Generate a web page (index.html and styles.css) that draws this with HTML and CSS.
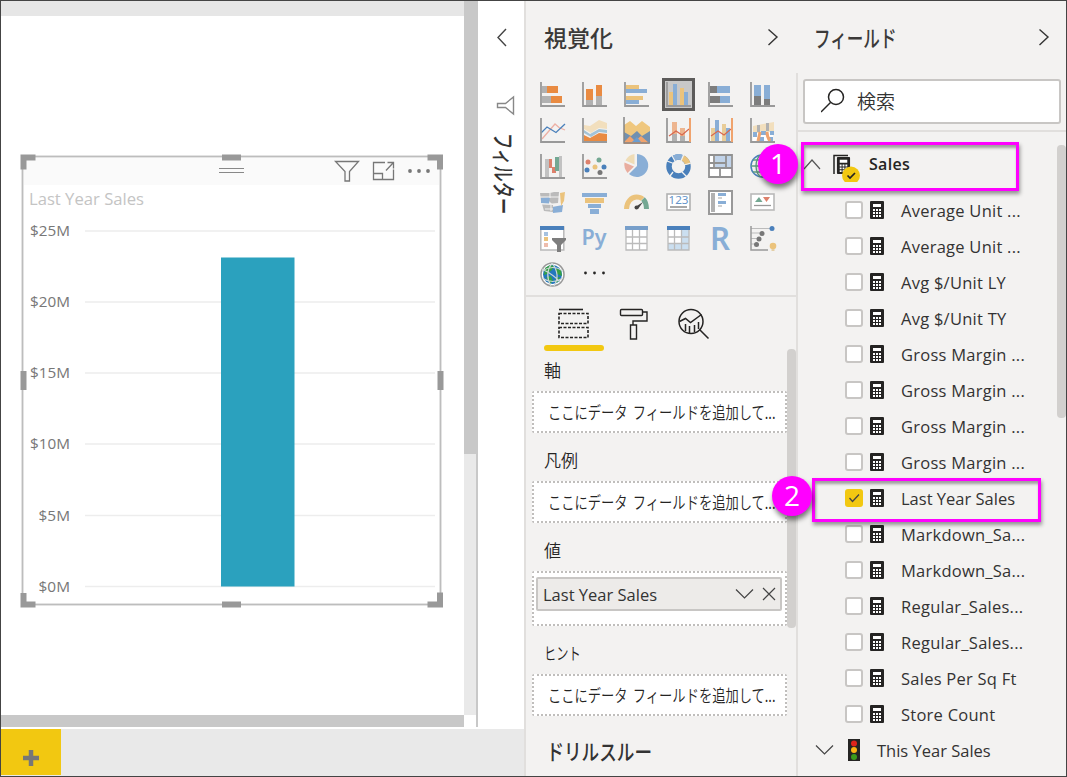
FILE: index.html
```html
<!DOCTYPE html>
<html lang="ja">
<head>
<meta charset="utf-8">
<title>Power BI</title>
<link rel="stylesheet" href="styles.css">
</head>
<body>
<svg class="defs" width="0" height="0">
  <symbol id="calc" viewBox="0 0 14 18"><rect width="14" height="18" rx="1" fill="#252423"/><path d="M3 3h8v3H3z" fill="#fff"/><path d="M3 9h8M3 12h8M3 15h8" stroke="#fff" stroke-width="2" stroke-dasharray="2 1"/></symbol>
  <symbol id="axes" viewBox="0 0 25 25"><path d="M1 0v24h24" fill="none" stroke="#999" stroke-width="1.8"/></symbol>
</svg>
<div class="app">
  <main class="report">
    <div class="workspace">
      <div class="canvas">
        <div class="page">
          <svg class="visual" width="426" height="456" viewBox="19 152 426 456">
            <path d="M24 157h416v28H24z" fill="#fafafa"/>
            <rect x="22.5" y="156.5" width="418" height="448" fill="none" stroke="#e3e3e3" stroke-width="3"/>
            <rect x="22.5" y="156.5" width="418" height="448" fill="none" stroke="#bdbdbd"/>
            <g fill="none" stroke="#999" stroke-width="6"><path d="M23.500 169.500v-12h12M427.500 157.500h12.500v12M23.500 593v11.500h12M427.500 604.500h12.500v-12M222 157.500h19M222 604.500h19M23.500 371v19M440.500 371v19"/></g>
            <path d="M219 168.500h25M219 172.500h25" stroke="#888"/>
            <path d="M335.500 161.500h23l-9 10v9.500h-4.500v-9.500z" fill="none" stroke="#777" stroke-width="1.300"/>
            <path d="M385 162.500h-11.500v17h20v-10M373.500 173.500h9v6M386 170.500l7-7.500M387.500 162.500h6v6" fill="none" stroke="#777" stroke-width="1.300"/>
            <g fill="#777"><circle cx="410" cy="171" r="1.900"/><circle cx="419" cy="171" r="1.900"/><circle cx="428" cy="171" r="1.900"/></g>
            <text x="29" y="204.500" font-size="16" textLength="115" lengthAdjust="spacingAndGlyphs" fill="#c4c4c4">Last Year Sales</text>
            <path d="M85 231h350M85 302h350M85 373h350M85 444h350M85 515.500h350M85 586.500h350" stroke="#ededed" stroke-width="1.600"/>
            <g font-size="15" fill="#777">
              <text x="30" y="236" textLength="40" lengthAdjust="spacingAndGlyphs">$25M</text>
              <text x="30" y="307" textLength="40" lengthAdjust="spacingAndGlyphs">$20M</text>
              <text x="30" y="378" textLength="40" lengthAdjust="spacingAndGlyphs">$15M</text>
              <text x="30" y="449" textLength="40" lengthAdjust="spacingAndGlyphs">$10M</text>
              <text x="38.500" y="521" textLength="31.500" lengthAdjust="spacingAndGlyphs">$5M</text>
              <text x="38.500" y="592" textLength="31.500" lengthAdjust="spacingAndGlyphs">$0M</text>
            </g>
            <path d="M221 257.500h73.500v329H221z" fill="#2ba1be"/>
          </svg>
        </div>
        <div class="hscroll"></div>
      </div>
      <div class="vscroll"><div class="vthumb"></div></div>
      <aside class="filters">
        <svg class="filter-icons" width="46" height="120" viewBox="0 0 46 120" fill="none">
          <path d="M28 28l-8 8.500 8 8.500" stroke="#444" stroke-width="1.400"/>
          <path d="M35.500 96v17l-8-6.500h-8v-4h8z" stroke="#888" stroke-width="1.400"/>
        </svg>
        <div class="filter-title">フィルター</div>
      </aside>
    </div>
    <div class="tabs"><div class="add"><svg width="18" height="18"><path d="M9 1v16M1 9h16" stroke="#777" stroke-width="4.500"/></svg></div></div>
  </main>

  <section class="viz">
    <header class="pane-head viz-head"><h2>視覚化</h2><svg width="12" height="18"><path d="M1.500 1.500L10 9l-8.500 8" fill="none" stroke="#333" stroke-width="1.400"/></svg></header>
    <div class="gallery">
      <svg viewBox="0 0 25 25"><use href="#axes"/><path d="M2 4h5v7H2zM2 14h9v7H2z" fill="#b1b1b1"/><path d="M7 4h11v7H7zM11 14h11v7H11z" fill="#e98b42"/></svg>
      <svg viewBox="0 0 25 25"><path d="M4 18h7v5H4zM14 14h6v9h-6z" fill="#b1b1b1"/><path d="M4 7h7v11H4zM14 3h6v11h-6z" fill="#e98b42"/><use href="#axes"/></svg>
      <svg viewBox="0 0 25 25"><path d="M2 3h13v4H2zM2 14h17v4H2z" fill="#ebc37c"/><path d="M2 7h21v4H2zM2 18h13v4H2z" fill="#89aed6"/><use href="#axes"/></svg>
      <svg viewBox="0 0 25 25"><rect x="-2.500" y="-2.500" width="30" height="30" fill="#c8c8c8" stroke="#5c5b5a" stroke-width="3"/><path d="M3 10h4v13H3zM14 6h4v17h-4z" fill="#ebc37c"/><path d="M7 2h4v21H7zM18 10h4v13h-4z" fill="#89aed6"/><use href="#axes"/></svg>
      <svg viewBox="0 0 25 25"><path d="M2 4h7v7H2zM2 14h10v7H2z" fill="#7d7d7d"/><path d="M9 4h13v7H9zM12 14h10v7H12z" fill="#89aed6"/><use href="#axes"/></svg>
      <svg viewBox="0 0 25 25"><path d="M4 14h7v9H4zM14 17h6v6h-6z" fill="#7d7d7d"/><path d="M4 3h7v11H4zM14 3h6v14h-6z" fill="#89aed6"/><use href="#axes"/></svg>

      <svg viewBox="0 0 25 25"><path d="M2 21L15 6l4 3.500 6 2.500" fill="none" stroke="#edb0a4" stroke-width="1.300"/><path d="M1 15l6-6 9 5.500L25 6" fill="none" stroke="#4a80bb" stroke-width="1.300"/><use href="#axes"/></svg>
      <svg viewBox="0 0 25 25"><path d="M2 7l6 1 9-6 8 3v6l-8-1-8 5-7-4z" fill="#f2dfbd"/><path d="M2 12l6 4 9-5 8 1v3l-8-1-8 5-7-4z" fill="#a3c3d6"/><path d="M2 17l6 3 9-5 8 1v8H2z" fill="#e98b42"/><use href="#axes"/></svg>
      <svg viewBox="0 0 25 25"><path d="M0 7l6-4 6 5 6-5 8 6v9H0z" fill="#efc77e"/><path d="M0 14l7 4 6-5 5 5 8-5v12H0z" fill="#7190b0"/><path d="M0 24l6-6 5 5 6-5 8 7v1H0z" fill="#f0a36d"/><path d="M8 24l5-5 4 5z" fill="#6a9dd1"/><path d="M0-1v26h26" fill="none" stroke="#858585" stroke-width="1.500"/></svg>
      <svg viewBox="0 0 25 25"><path d="M6 4h5v12H6zM14 10h5v9h-5z" fill="#edb58f"/><path d="M6 16h5v7H6zM14 18h5v5h-5z" fill="#b1b1b1"/><path d="M3 18l7-5 6 4 7-6" fill="none" stroke="#d8674e" stroke-width="1.200"/><use href="#axes"/><path d="M24 0v24" stroke="#f0a36d" stroke-width="2"/></svg>
      <svg viewBox="0 0 25 25"><path d="M3 10h4v13H3zM14 6h4v17h-4z" fill="#e9cd98"/><path d="M7 2h4v21H7zM18 10h4v13h-4z" fill="#89aed6"/><path d="M3 18l7-5 6 4 7-6" fill="none" stroke="#d8674e" stroke-width="1.200"/><use href="#axes"/><path d="M24 0v24" stroke="#f0a36d" stroke-width="2"/></svg>
      <svg viewBox="0 0 25 25"><path d="M3 14h20v9H3z" fill="#fff"/><path d="M3 8l10-2 11-2v9l-10 2H3z" fill="#f2dfbd"/><path d="M7 7h3v7H7zM16 5h3v8h-3z" fill="#b1b1b1"/><path d="M3 14h4v5H3zM9 19h5v4H9zM11 13h5v4h-5zM19 19h4v4h-4zM20 13h4v4h-4z" fill="#89aed6"/><path d="M10 14q-1 5-2 9M17 14q0 5 3 9" stroke="#f0a36d" stroke-width="3" fill="none"/><use href="#axes"/></svg>

      <svg viewBox="0 0 25 25"><path d="M5 5h4v18H5zM19 2h3v21h-3z" fill="#c2c2c2"/><path d="M9 5h3v9H9zM12 13h3v6h-3zM14 15h2v4h-2z" fill="#dd816c"/><path d="M15 3h4v14h-4z" fill="#74a893"/><use href="#axes"/></svg>
      <svg viewBox="0 0 25 25"><circle cx="6" cy="8" r="2.500" fill="#dd816c"/><circle cx="17" cy="6" r="2.500" fill="#74a893"/><circle cx="5" cy="16" r="2.500" fill="#4a80bb"/><circle cx="13" cy="13" r="2.500" fill="#ebc37c"/><circle cx="22" cy="13" r="2.500" fill="#4a80bb"/><circle cx="18" cy="18.500" r="2.500" fill="#777"/><use href="#axes"/></svg>
      <svg viewBox="0 0 25 25"><path d="M13 12V0a11.500 11.500 0 1 1-8 20z" fill="#89aed6"/><path d="M10.500 10.500V0A12 12 0 0 0 1.500 6.500z" fill="#efdcb6"/><path d="M10 12.500L.5 8.500Q-.5 14 3.500 19z" fill="#e9ad9f"/></svg>
      <svg viewBox="0 0 25 25"><g fill="none" stroke-width="5.500"><circle cx="12.500" cy="12.500" r="9.500" stroke="#4a80bb"/><path d="M8 4.100a9.500 9.500 0 0 1 8.500-.3" stroke="#89aed6"/><path d="M16.500 3.800a9.500 9.500 0 0 1 5.400 6.700" stroke="#ebc37c"/></g><path d="M9 7L5 0M15 7l3-7M18 11l7-2M7 18l-3 4M16 18l5 5M9 10L1 7" stroke="#f3f2f1" stroke-width="1.300"/></svg>
      <svg viewBox="0 0 25 25"><path d="M1 1h23v22H1z" fill="#fff"/><path d="M7 1h16v12H7z" fill="#c1d3e9"/><path d="M1 1h23v22H1zM6 1v13M1 9h5M1 14h23M6 9h12M18 1v13M12 14v9" fill="none" stroke="#919191" stroke-width="1.800"/></svg>
      <svg viewBox="0 0 25 25" fill="none"><circle cx="12" cy="12" r="11" stroke="#4a80bb" stroke-width="1.500"/><ellipse cx="12" cy="12" rx="6" ry="11" stroke="#5f9d83" stroke-width="1.300"/><path d="M1 12h22M3 6h18M3 18h18" stroke="#5f9d83" stroke-width="1.300"/></svg>

      <svg viewBox="0 0 25 25"><path d="M0 3h10l4-1h5l-1 11-6 1-3-3H1z" fill="#bbb"/><path d="M1 8l9-1-1 7-8-1zM12 17l11-2-1 7-9 1z" fill="#89aed6"/><path d="M2 14l11 1v7l-9-1z" fill="#bbb"/><path d="M20 3l5-1-1 9-3 5z" fill="#ebc37c"/><path d="M0 7h19M10 3v5M1 14h20M5 19h8M11 15v6" stroke="#f3f2f1"/></svg>
      <svg viewBox="0 0 25 25"><path d="M0 3h25v4H0zM6 14h13v4H6zM8 19h9v5H8z" fill="#89aed6"/><path d="M3 8h19v5H3z" fill="#ebc37c"/></svg>
      <svg viewBox="0 0 25 25" fill="none" stroke-width="5"><path d="M2.500 19c0-7 5-12 10-12 2 0 4 0 6 2" stroke="#ebc37c"/><path d="M19 9c3 3 3.500 6 3.500 10" stroke="#74a893"/><path d="M12 16.500l7-4.500-5 7z" fill="#444"/><circle cx="12.500" cy="17.500" r="2" fill="#444"/></svg>
      <svg viewBox="0 0 25 25"><rect x="1" y="4" width="23" height="16" fill="#fff" stroke="#b1b1b1" stroke-width="1.600"/><text x="2.500" y="14" font-size="11" textLength="20" lengthAdjust="spacingAndGlyphs" fill="#6695c9">123</text><path d="M4 17h17" stroke="#777" stroke-width="1.300"/></svg>
      <svg viewBox="0 0 25 25"><rect x="1" y="1" width="23" height="23" fill="#fff" stroke="#999" stroke-width="2"/><path d="M3 3h4v19H3z" fill="#b1b1b1"/><path d="M10 3h8v3h-8zM10 11h8v3h-8z" fill="#89aed6"/><path d="M10 8h4M10 16h4" stroke="#c1c1c1" stroke-width="1.500"/></svg>
      <svg viewBox="0 0 25 25"><rect x="1" y="4" width="23" height="16" fill="#fff" stroke="#b9b9b9" stroke-width="1.600"/><path d="M5 12l4-5 3.500 5z" fill="#74a893"/><path d="M13 7h7l-3.500 5z" fill="#dd816c"/><path d="M4 15.500h17" stroke="#999" stroke-width="1.300"/></svg>

      <svg viewBox="0 0 25 25"><rect x=".8" y="1" width="23" height="23" fill="#fff" stroke="#b9b9b9" stroke-width="1.500"/><path d="M0 0h24v4H0z" fill="#4a80bb"/><path d="M4 6h4v4H4z" fill="#a6c2e0"/><path d="M4 11h4v4H4z" fill="#ebc37c"/><path d="M4 17h4v4H4z" fill="#eebdad"/><path d="M12 12h14v2l-5 5v7h-4v-7l-5-5z" fill="#7d7d7d"/></svg>
      <svg viewBox="0 0 25 25"><text x="-.5" y="18.500" font-size="22" font-weight="600" textLength="25" lengthAdjust="spacingAndGlyphs" fill="#89aed6">Py</text></svg>
      <svg viewBox="0 0 25 25"><path d="M2 1h21v23H2z" fill="#fff"/><path d="M2 4v20h21V4M8.500 4v20M15.500 4v20M2 11h21M2 17.500h21" stroke="#bbb" stroke-width="1.300" fill="none"/><path d="M1 0h23v4H1z" fill="#779fca"/></svg>
      <svg viewBox="0 0 25 25"><path d="M2 1h21v23H2z" fill="#fff"/><path d="M16 4h7v20H2v-6h14z" fill="#cbdff0"/><path d="M2 4v20h21V4M8.500 4v20M15.500 4v20M2 11h21M2 17.500h21" stroke="#bbb" stroke-width="1.300" fill="none"/><path d="M1 0h23v4H1z" fill="#4a80bb"/></svg>
      <svg viewBox="0 0 25 25"><text x="2" y="24" font-size="32" font-weight="600" textLength="20" lengthAdjust="spacingAndGlyphs" fill="#89aed6">R</text></svg>
      <svg viewBox="0 0 25 25"><path d="M1 2.500h20M1 7h11M1 12.500h8M1 18h5" stroke="#bbb"/><path d="M1 0v24h17" fill="none" stroke="#999" stroke-width="1.500"/><circle cx="22" cy="2.500" r="2.500" fill="#4a80bb"/><g fill="#777"><circle cx="12" cy="7.500" r="2.500"/><circle cx="9" cy="13" r="2.500"/><circle cx="6.500" cy="18.500" r="2.500"/></g><circle cx="23" cy="20" r="3.300" fill="#ebc37c"/><path d="M21.500 23h3v2h-3z" fill="#e3cfa6"/></svg>

      <svg viewBox="0 0 25 25"><circle cx="12.500" cy="12.500" r="11.500" fill="#fff" stroke="#999" stroke-width="1.500"/><circle cx="12.500" cy="12.500" r="9.500" fill="#2377bd"/><path d="M5 6l5-3 4 1-2 4-5 4-3 1zM15 6l6 2 1 6-5-2zM6 15l5-1 2 5-3 3zM16 16l4-1-2 5-3 1z" fill="#34a045"/><path d="M2 9q11-7 21 0M2 16q11 7 21 0M12 1Q4 12 11 24M12 1q9 12 2 23M2 7q12 6 18 13" fill="none" stroke="#ccd6d7" stroke-width="1.200"/></svg>
      <svg viewBox="0 0 25 25" fill="#252423"><circle cx="3.500" cy="11" r="1.400"/><circle cx="12.500" cy="11" r="1.400"/><circle cx="21.500" cy="11" r="1.400"/></svg>
    </div>
    <div class="fieldpane">
      <nav class="modes">
        <svg width="270" height="55" viewBox="0 0 270 55" fill="none" stroke="#252423">
          <path d="M33 13.500h24" stroke-width="1.600"/><path d="M33 17.500h29v10H33zM33 31.500h29v10H33z" stroke-width="1.600" stroke-dasharray="3 1.500"/>
          <rect x="94.500" y="13.500" width="22" height="6" rx="1" stroke-width="1.400"/><path d="M116.500 16h4.500v9H107v4M104.500 29h6v14h-6z" stroke-width="1.400"/>
          <circle cx="165" cy="25.500" r="12" stroke-width="1.500"/><path d="M173.500 33.500l9 9M153.500 25.500l6-3 5 4 11-8" stroke-width="1.500"/><path d="M159.500 28v7M163.500 30v7M168.500 29v7M172.500 26v7" stroke-width="1.500"/>
          <path d="M21 52h54" stroke="#f2c811" stroke-width="6" stroke-linecap="round"/>
        </svg>
      </nav>
      <div class="wells">
        <h4>軸</h4><div class="well"><span class="drop">ここにデータ フィールドを追加して...</span></div>
        <h4>凡例</h4><div class="well"><span class="drop">ここにデータ フィールドを追加して...</span></div>
        <h4>値</h4><div class="well filled"><div class="chip"><span class="latin">Last Year Sales</span><svg width="42" height="18" fill="none" stroke="#444" stroke-width="1.200"><path d="M2 4.500l8.500 8.500L19 4.500M29 3l12 12M41 3L29 15"/></svg></div></div>
        <h4><span class="hint">ヒント</span></h4><div class="well"><span class="drop">ここにデータ フィールドを追加して...</span></div>
        <h3>ドリルスルー</h3>
      </div>
      <div class="vizthumb"></div>
    </div>
  </section>

  <section class="fields">
    <header class="pane-head field-head"><h2>フィールド</h2><svg width="12" height="18"><path d="M1.500 1.500L10 9l-8.500 8" fill="none" stroke="#333" stroke-width="1.400"/></svg></header>
    <div class="searchwrap"><div class="search"><svg width="26" height="26" fill="none" stroke="#252423" stroke-width="1.500"><circle cx="15" cy="9" r="7.500"/><path d="M9.500 14.500L0 24"/></svg><span>検索</span></div></div>
    <div class="tree">
      <div class="table"><svg width="56" height="30" viewBox="0 0 56 30"><path d="M0 17l8-9 8 9" fill="none" stroke="#555" stroke-width="1.200"/><path d="M30 22V3.500h14" fill="none" stroke="#252423" stroke-width="1.500"/><use href="#calc" x="32.500" y="5" width="14" height="17"/><circle cx="47" cy="23.500" r="9" fill="#f2c811"/><path d="M43.500 23.500l2.500 2.500 5-5" fill="none" stroke="#252423" stroke-width="1.700"/></svg><b>Sales</b></div>
      <div class="row"><i></i><svg><use href="#calc"/></svg><span>Average Unit ...</span></div>
      <div class="row"><i></i><svg><use href="#calc"/></svg><span>Average Unit ...</span></div>
      <div class="row"><i></i><svg><use href="#calc"/></svg><span>Avg $/Unit LY</span></div>
      <div class="row"><i></i><svg><use href="#calc"/></svg><span>Avg $/Unit TY</span></div>
      <div class="row"><i></i><svg><use href="#calc"/></svg><span>Gross Margin ...</span></div>
      <div class="row"><i></i><svg><use href="#calc"/></svg><span>Gross Margin ...</span></div>
      <div class="row"><i></i><svg><use href="#calc"/></svg><span>Gross Margin ...</span></div>
      <div class="row"><i></i><svg><use href="#calc"/></svg><span>Gross Margin ...</span></div>
      <div class="row"><i class="on"><svg class="tick" viewBox="0 0 18 18"><path d="M4.500 9l3 3.500 6.500-7" fill="none" stroke="#444" stroke-width="1.300"/></svg></i><svg><use href="#calc"/></svg><span class="latin">Last Year Sales</span></div>
      <div class="row"><i></i><svg><use href="#calc"/></svg><span>Markdown_Sa...</span></div>
      <div class="row"><i></i><svg><use href="#calc"/></svg><span>Markdown_Sa...</span></div>
      <div class="row"><i></i><svg><use href="#calc"/></svg><span>Regular_Sales...</span></div>
      <div class="row"><i></i><svg><use href="#calc"/></svg><span>Regular_Sales...</span></div>
      <div class="row"><i></i><svg><use href="#calc"/></svg><span>Sales Per Sq Ft</span></div>
      <div class="row"><i></i><svg><use href="#calc"/></svg><span>Store Count</span></div>
      <div class="row kpi"><svg class="kpi-icon" viewBox="0 0 46 24"><path d="M1 7.500l8.500 8.500L18 7.500" fill="none" stroke="#444" stroke-width="1.200"/><path d="M33 1h12v22H33z" fill="#252423"/><circle cx="39" cy="5.500" r="3" fill="#e0241b"/><circle cx="39" cy="12" r="3" fill="#fcb314"/><circle cx="39" cy="19" r="3" fill="#3c9a1c"/></svg><span class="latin">This Year Sales</span></div>
      <div class="treethumb"></div>
    </div>
  </section>
  <div class="mark mark-table"></div><div class="mark mark-field"></div>
  <div class="num num-1">1</div><div class="num num-2">2</div>
</div>
</body>
</html>
```

FILE: styles.css
```css
* { box-sizing: border-box; }
body { margin: 0; font-family: "Open Sans", "Noto Sans CJK JP", sans-serif; color: #333; }
h2, h3, h4 { margin: 0; }
svg { display: block; flex: none; }
.defs { position: absolute; }
.app { position: relative; width: 1067px; height: 777px; border: 1px solid #444; display: grid; grid-template-columns: 523px 272px 270px; background: #f3f2f1; overflow: hidden; }

.report { display: flex; flex-direction: column; background: #fff; }
.workspace { display: flex; height: 726px; }
.canvas { width: 463px; display: flex; flex-direction: column; }
.page { flex: 1; border-top: 15px solid #e6e6e6; padding: 136px 0 0 18px; }
.visual { font-family: "Open Sans", sans-serif; }
.hscroll { height: 12px; background: #c8c8c8; }
.vscroll { width: 14px; border-right: 2px solid #c8c8c8; background: linear-gradient(#e9e9e9 714px, #fff 714px); }
.vthumb { height: 453px; background: #c8c8c8; }
.filters { width: 46px; }
.filter-title { writing-mode: vertical-rl; text-orientation: sideways; font: 500 23px/46px "Noto Sans CJK JP", sans-serif; white-space: nowrap; transform: scaleY(.71); transform-origin: top; margin-top: 12px; width: 50px; }
.tabs { flex: 1; margin-top: 2px; background: #e9e9e9; }
.add { width: 60px; height: 46px; background: #f2c811; display: flex; padding: 20px 0 0 21px; }

.viz { border-left: 2px solid #e1dfdd; display: flex; flex-direction: column; }
.pane-head { display: flex; justify-content: space-between; height: 77px; padding-top: 27px; }
.pane-head h2 { font: 500 23px/18px "Noto Sans CJK JP", sans-serif; color: #3b3a39; white-space: nowrap; transform-origin: left; }
.viz-head { padding-left: 18px; padding-right: 17px; }
.gallery { display: grid; grid-template-columns: repeat(6, 25px); grid-auto-rows: 25px; gap: 11px 17px; padding: 4px 0 0 14px; height: 217px; }
.gallery svg { width: 25px; height: 25px; overflow: visible; }
.gallery text { font-family: "Noto Sans", sans-serif; }
.fieldpane { position: relative; flex: 1; border-top: 2px solid #e1dfdd; }
.modes { height: 57px; }
.modes svg { margin-top: -1px; }
.wells { padding-left: 6px; width: 261px; }
.wells h4 { font: 350 17px/20px "Noto Sans CJK JP", sans-serif; padding-left: 12px; height: 39px; padding-top: 8px; color: #252423; }
.wells h4:first-child { height: 38px; padding-top: 7px; }
.hint { display: inline-block; transform: scaleX(.72); transform-origin: left; }
.well { width: 255px; height: 42px; margin-bottom: 9px; border: 2px dotted #c0bebc; border-radius: 2px; background: #fff; padding: 8px 0 0 14px; }
.drop { display: block; width: 230px; font: 350 17px/22px "Noto Sans CJK JP", sans-serif; color: #252423; white-space: nowrap; word-spacing: 3px; transform: scaleX(.78); transform-origin: left; }
.well.filled { height: 55px; padding: 4px 3px 4px 2px; }
.chip { height: 34px; border: 2px solid #c8c6c4; border-radius: 2px; background: #edebe9; display: flex; justify-content: space-between; align-items: center; padding: 0 4px 0 5px; }
.wells h3 { font: 500 22px/30px "Noto Sans CJK JP", sans-serif; padding: 10px 0 0 18px; white-space: nowrap; transform: scaleX(.8); transform-origin: left; }
.vizthumb { position: absolute; right: 0; top: 52px; width: 9px; height: 279px; border-radius: 4px; background: #d2d0ce; }

.fields { display: flex; flex-direction: column; }
.field-head { padding-left: 18px; padding-right: 16px; height: 72px; }
.field-head h2 { width: 80px; font-weight: 500; transform: scaleX(.72); }
.searchwrap { border-left: 2px solid #e1dfdd; border-bottom: 2px solid #e1dfdd; padding: 6px 5px 5px; height: 59px; }
.search { height: 45px; border: 2px solid #c8c6c4; border-radius: 3px; background: #fff; display: flex; align-items: center; gap: 10px; padding: 0 0 2px 16px; font: 350 19px/24px "Noto Sans CJK JP", sans-serif; }
.tree { position: relative; flex: 1; border-left: 2px solid #e1dfdd; }
.table { display: flex; height: 60px; padding: 20px 0 0 6px; line-height: 24px; gap: 9px; color: #252423; }
.table b { font-weight: 600; font-size: 16px; letter-spacing: .3px; }
.row { height: 36px; display: flex; align-items: center; padding-left: 47px; }
.row i { width: 18px; height: 18px; border: 2px solid #c8c6c4; border-radius: 3px; background: #fff; margin-right: 7px; }
.row i.on { border: 0; background: #f2c811; }
.row svg { width: 14px; height: 18px; margin-right: 17px; }
.row svg.tick { width: 18px; }
.row span { font-size: 16.5px; white-space: nowrap; letter-spacing: .25px; padding-top: 1px; }
.latin, .row .latin { font-size: 16.5px; white-space: nowrap; letter-spacing: 0; }
.row.kpi { padding-left: 17px; }
.row svg.kpi-icon { width: 46px; height: 24px; margin-right: 16px; }
.treethumb { position: absolute; right: 0; top: 13px; width: 9px; height: 273px; border-radius: 4px; background: #d2d0ce; }

.mark { position: absolute; border: 3px solid #f0f; box-shadow: 1px 3px 4px rgba(0,0,0,.4), inset 1px 3px 3px rgba(0,0,0,.35); }
.mark-table { left: 800px; top: 141px; width: 218px; height: 49px; }
.mark-field { left: 811px; top: 477px; width: 229px; height: 44px; }
.num { position: absolute; width: 40px; height: 40px; border-radius: 50%; background: #f0f; color: #fff; text-align: center; font: 28px/38px "Open Sans", sans-serif; box-shadow: 1px 4px 5px rgba(0,0,0,.5); }
.num-1 { left: 757px; top: 143px; }
.num-2 { left: 771px; top: 475px; }
```
